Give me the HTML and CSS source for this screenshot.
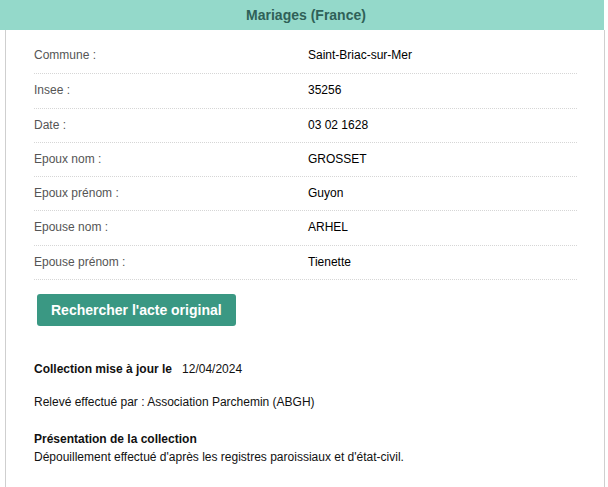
FILE: index.html
```html
<!DOCTYPE html>
<html lang="fr">
<head>
<meta charset="utf-8">
<title>Mariages (France)</title>
<link rel="stylesheet" href="styles.css">
</head>
<body>
<div class="card">
  <div class="card-header">Mariages (France)</div>
  <div class="card-body">
    <div class="rows">
      <div class="row"><span class="label">Commune :</span><span class="value">Saint-Briac-sur-Mer</span></div>
      <div class="row"><span class="label">Insee :</span><span class="value">35256</span></div>
      <div class="row"><span class="label">Date :</span><span class="value">03 02 1628</span></div>
      <div class="row"><span class="label">Epoux nom :</span><span class="value">GROSSET</span></div>
      <div class="row"><span class="label">Epoux prénom :</span><span class="value">Guyon</span></div>
      <div class="row"><span class="label">Epouse nom :</span><span class="value">ARHEL</span></div>
      <div class="row"><span class="label">Epouse prénom :</span><span class="value">Tienette</span></div>
    </div>
    <button class="btn" type="button">Rechercher l'acte original</button>
    <div class="info">
      <p class="updated"><strong>Collection mise à jour le</strong><span class="date">12/04/2024</span></p>
      <p class="releve">Relevé effectué par : Association Parchemin (ABGH)</p>
      <div class="presentation">
        <strong class="pres-title">Présentation de la collection</strong>
        <p class="pres-text">Dépouillement effectué d'après les registres paroissiaux et d'état-civil.</p>
      </div>
    </div>
  </div>
</div>
</body>
</html>
```

FILE: styles.css
```css
* { box-sizing: border-box; }

html, body {
  margin: 0;
  padding: 0;
  background: #ffffff;
}

body {
  font-family: "Liberation Sans", Arial, sans-serif;
  font-size: 12px;
  color: #111111;
  overflow: hidden;
  height: 487px;
}

.card {
  width: 605px;
}

.card-header {
  width: 604px;
  height: 30px;
  line-height: 30px;
  background: #94d9ca;
  color: #2f6158;
  font-weight: bold;
  font-size: 14px;
  text-align: center;
  padding-left: 8px;
}

.card-body {
  margin-left: 5px;
  width: 600px;
  border-left: 1px solid #cfcfcf;
  border-right: 1px solid #cfcfcf;
  padding: 10px 27px 40px 28px;
}

.rows {
  display: flex;
  flex-direction: column;
}

.row {
  display: grid;
  grid-template-columns: 274px 1fr;
  padding: 8px 0;
  line-height: 17.3px;
  border-bottom: 1px dotted #d6d6d6;
}

.row:first-child {
  padding-top: 6.5px;
  padding-bottom: 9.5px;
}

.label {
  color: #555555;
}

.value {
  color: #000000;
}

.btn {
  display: block;
  margin: 14px 0 0 3px;
  height: 32px;
  padding: 0 14px;
  border: none;
  border-radius: 3px;
  background: #3a9883;
  color: #ffffff;
  font-family: "Liberation Sans", Arial, sans-serif;
  font-weight: bold;
  font-size: 14px;
  line-height: 32px;
  cursor: pointer;
}

.info {
  padding-top: 34px;
  line-height: 18px;
}

.info p {
  margin: 0;
}

.updated strong {
  font-weight: bold;
}

.date {
  margin-left: 10px;
}

.releve {
  margin-top: 15px !important;
}

.presentation {
  margin-top: 19px;
}

.pres-title {
  display: block;
  font-weight: bold;
}
```
